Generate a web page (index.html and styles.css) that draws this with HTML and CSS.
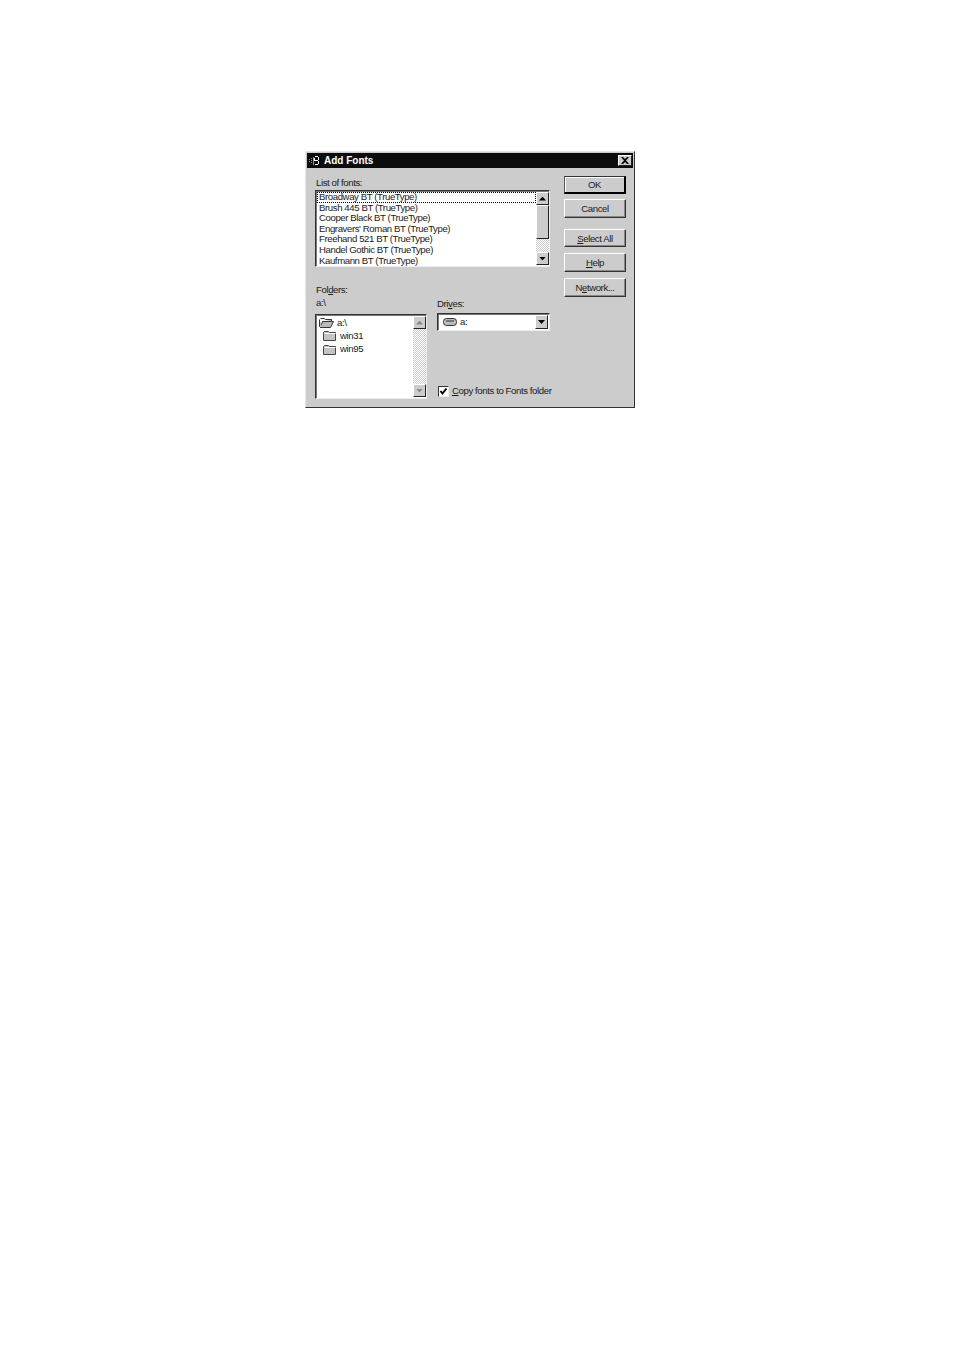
FILE: index.html
```html
<!DOCTYPE html>
<html lang="en">
<head>
<meta charset="utf-8">
<title>Add Fonts</title>
<link rel="stylesheet" href="styles.css">
</head>
<body>
<div class="dialog">
  <div class="titlebar">
    <svg class="app-icon" width="10" height="11" viewBox="0 0 10 11"><path d="M0 4h1v1H0zM0 6h1v1H0zM2 3h1v1H2zM2 5h1v1H2zM2 7h1v1H2zM4 2h1v8H4z" fill="#999"/><path d="M6 1h3v1H6zM5 3h1v3H5zM9 2h1v3H9zM6 5h3v1H6zM6 9h3v1H6zM9 6h1v3H9z" fill="#fff"/></svg>
    <span class="title-text">Add Fonts</span>
    <span class="close"><svg width="8" height="7" viewBox="0 0 8 7"><path d="M0 0h2l2 2 2-2h2L5 3.500 8 7H6L4 5 2 7H0l3-3.500z" fill="#000"/></svg></span>
  </div>
  <div class="content">
    <div class="main">
      <div class="label label-list">List of fonts:</div>
      <div class="listbox fonts">
        <ul class="rows">
          <li class="focused">Broadway BT (TrueType)</li>
          <li>Brush 445 BT (TrueType)</li>
          <li>Cooper Black BT (TrueType)</li>
          <li>Engravers' Roman BT (TrueType)</li>
          <li>Freehand 521 BT (TrueType)</li>
          <li>Handel Gothic BT (TrueType)</li>
          <li>Kaufmann BT (TrueType)</li>
        </ul>
        <div class="scrollbar">
          <span class="sb-btn"><i class="arrow up"></i></span>
          <span class="thumb"></span>
          <span class="track"></span>
          <span class="sb-btn"><i class="arrow down"></i></span>
        </div>
      </div>
      <div class="lower">
        <div class="folders">
          <div class="label">Fol<u>d</u>ers:</div>
          <div class="label path">a:\</div>
          <div class="listbox tree">
            <ul class="tree-rows">
              <li class="root">
                <svg width="16" height="12" viewBox="0 0 16 12"><path d="M1.500 1.500h4l1 1h6v2h-9l-2 6h10l3-6h-2" fill="#bbb" stroke="#333"/><path d="M.5 2.500v7l1 1h2" fill="#bbb" stroke="#333"/></svg>
                <span>a:\</span>
              </li>
              <li>
                <svg width="14" height="11" viewBox="0 0 14 11"><path d="M.5 2.500l1-1h4l1 1h6v8H.5z" fill="#c4c4c4" stroke="#444"/><path d="M1.500 3.500h11" stroke="#fff"/></svg>
                <span>win31</span>
              </li>
              <li>
                <svg width="14" height="11" viewBox="0 0 14 11"><path d="M.5 2.500l1-1h4l1 1h6v8H.5z" fill="#c4c4c4" stroke="#444"/><path d="M1.500 3.500h11" stroke="#fff"/></svg>
                <span>win95</span>
              </li>
            </ul>
            <div class="scrollbar full">
              <span class="sb-btn"><i class="arrow up dim"></i></span>
              <span class="track"></span>
              <span class="sb-btn"><i class="arrow down dim"></i></span>
            </div>
          </div>
        </div>
        <div class="drives">
          <div class="label drives-label">Dri<u>v</u>es:</div>
          <div class="combo">
            <svg width="14" height="8" viewBox="0 0 14 8"><rect x=".5" y=".5" width="13" height="7" rx="3" fill="#bbb" stroke="#333"/><path d="M3 3h8" stroke="#333"/></svg>
            <span>a:</span>
            <span class="sb-btn"><i class="arrow down"></i></span>
          </div>
          <label class="check">
            <span class="box"><svg width="9" height="9" viewBox="0 0 9 9"><path d="M1.500 4l2 2.500L7.500 1.500" fill="none" stroke="#000" stroke-width="2"/></svg></span>
            <span><u>C</u>opy fonts to Fonts folder</span>
          </label>
        </div>
      </div>
    </div>
    <div class="buttons">
      <span class="btn default">OK</span>
      <span class="btn cancel">Cancel</span>
      <span class="btn select"><u>S</u>elect All</span>
      <span class="btn help"><u>H</u>elp</span>
      <span class="btn network">N<u>e</u>twork...</span>
    </div>
  </div>
</div>
</body>
</html>
```
FILE: styles.css
```css
html, body { margin: 0; padding: 0; background: #fff; }
body { padding: 151px 0 0 305px; height: 1201px; overflow: hidden; }
* { box-sizing: border-box; }
.dialog {
  width: 330px; height: 257px; background: #ccc;
  border: 1px solid; border-color: #e4e4e4 #333 #333 #e4e4e4;
  padding: 1px;
  font: 9.600px/12px "Liberation Sans", Arial, sans-serif;
  letter-spacing: -.4px;
  color: #1a1a1a;
}
ul { list-style: none; margin: 0; padding: 0; }
.titlebar {
  height: 15px; background: #0c0c0c; color: #fff;
  display: flex; align-items: center; padding: 0 1px 0 2px;
}
.app-icon { flex: none; }
.title-text { font-weight: bold; font-size: 10px; margin-left: 5px; letter-spacing: 0; }
.close {
  margin-left: auto; width: 14px; height: 11px; background: #ccc;
  border: 1px solid; border-color: #fff #222 #222 #fff;
  display: flex; align-items: center; justify-content: center;
}
.content { display: flex; padding: 8px 0 0 8px; }
.main { width: 235px; flex: none; }
.label { height: 12px; padding-left: 1px; }
.drives-label { padding-left: 0; }
.label-list { margin-top: 1px; margin-bottom: 1px; }
.listbox {
  display: flex; background: #fff;
  border: 1px solid; border-color: #333 #eee #eee #333;
  box-shadow: inset 1px 1px 0 #777;
}
.fonts { height: 77px; }
.rows { flex: 1; padding: 1px 0 0 1px; min-width: 0; }
.rows li { height: 10.620px; line-height: 10.600px; padding-left: 2px; white-space: nowrap; }
.rows .focused { outline: 1px dotted #000; outline-offset: -1px; }
.scrollbar { width: 13px; flex: none; display: flex; flex-direction: column; margin: 1px 0; }
.sb-btn {
  flex: none; width: 13px; height: 13px; background: #ccc;
  border: 1px solid; border-color: #fff #222 #222 #fff;
  display: flex; align-items: center; justify-content: center;
}
.thumb { flex: none; height: 34px; background: #ccc; border: 1px solid; border-color: #fff #222 #222 #fff; }
.track { flex: 1; background: repeating-conic-gradient(#ccc 0 25%, #fff 0 50%) 0 0 / 2px 2px; }
.arrow { width: 7px; height: 4px; display: block; background: #000; }
.arrow.up { clip-path: polygon(50% 0, 100% 100%, 0 100%); }
.arrow.down { clip-path: polygon(0 0, 100% 0, 50% 100%); }
.arrow.dim { background: #888; }
.lower { display: flex; margin-top: 17px; }
.folders { width: 112px; flex: none; }
.path { margin-top: 1px; }
.tree { height: 85px; margin-top: 5px; }
.tree-rows { flex: 1; padding: 1px 0 0 3px; }
.tree-rows li { height: 13.300px; display: flex; align-items: center; gap: 3px; padding-left: 4px; }
.tree-rows .root { padding-left: 0; gap: 2px; }
.drives { margin-left: 10px; width: 114px; flex: none; padding-top: 14px; }
.combo {
  margin-top: 3px; height: 18px; width: 113px; background: #fff;
  border: 1px solid; border-color: #333 #eee #eee #333;
  box-shadow: inset 1px 1px 0 #777;
  display: flex; align-items: center; padding: 0 1px 0 5px; gap: 3px;
}
.combo .sb-btn { margin-left: auto; height: 14px; }
.check { display: flex; align-items: center; gap: 3px; margin-top: 54px; white-space: nowrap; margin-left: 1px; }
.box {
  width: 11px; height: 11px; background: #fff; flex: none;
  border: 1px solid; border-color: #333 #eee #eee #333;
  display: flex; align-items: center; justify-content: center;
}
.buttons { margin-left: 14px; width: 62px; flex: none; display: flex; flex-direction: column; }
.btn {
  display: flex; align-items: center; justify-content: center;
  background: #ccc; border: 1px solid; border-color: #fff #333 #333 #fff;
  box-shadow: inset -1px -1px 0 #888;
  white-space: nowrap;
}
.default { height: 18px; border-color: #333 #000 #000 #555; border-width: 1px 2px 2px 1px; box-shadow: inset 1px 1px 0 #fff; padding-top: 1px; }
.cancel { height: 19px; margin-top: 5px; }
.select { height: 18px; margin-top: 11px; padding-top: 1px; }
.help { height: 19px; margin-top: 6px; }
.network { height: 19px; margin-top: 6px; }
```
